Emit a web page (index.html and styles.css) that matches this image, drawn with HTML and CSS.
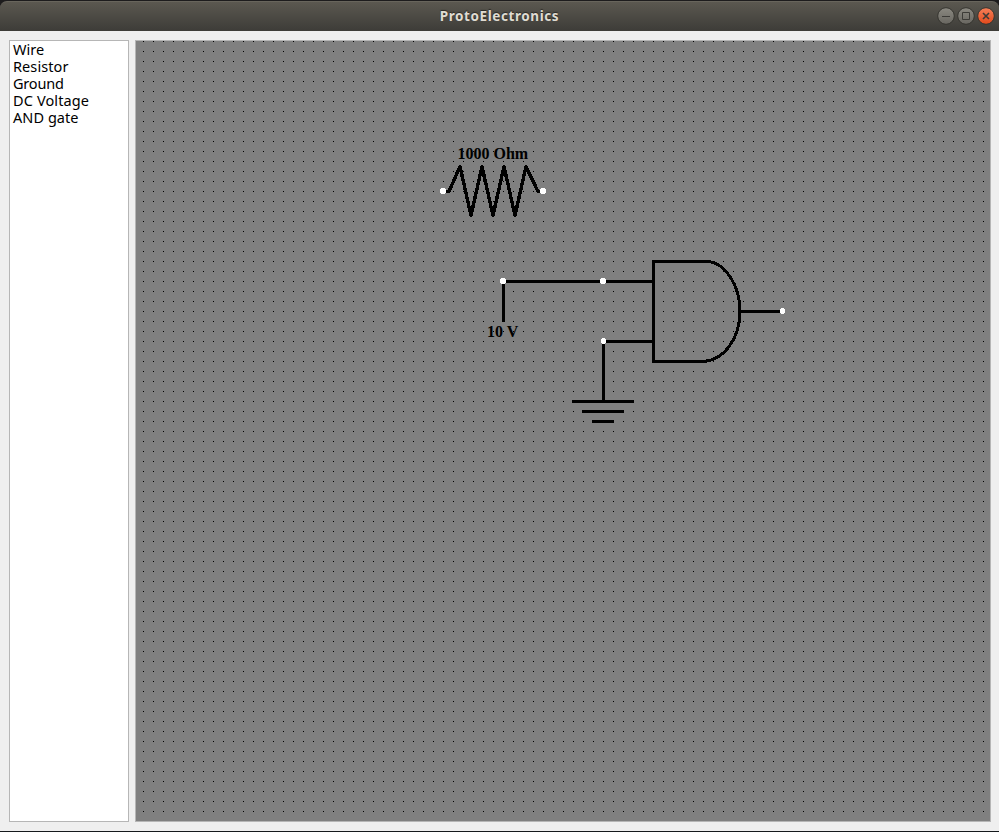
FILE: index.html
```html
<!DOCTYPE html>
<html lang="en">
<head>
<meta charset="utf-8">
<title>ProtoElectronics</title>
<link rel="stylesheet" href="styles.css">
</head>
<body>
<div class="window">
  <header class="titlebar">
    <h1 class="title">ProtoElectronics</h1>
    <div class="controls">
      <svg width="60" height="20" viewBox="0 0 60 20">
        <defs>
          <linearGradient id="grey" x1="0" y1="0" x2="0" y2="1"><stop offset="0" stop-color="#8b8981"/><stop offset="1" stop-color="#686660"/></linearGradient>
          <linearGradient id="orange" x1="0" y1="0" x2="0" y2="1"><stop offset="0" stop-color="#f58059"/><stop offset="1" stop-color="#e2491b"/></linearGradient>
        </defs>
        <g stroke="#35342f">
          <circle cx="10" cy="10" r="8.3" fill="url(#grey)"/>
          <circle cx="30" cy="10" r="8.3" fill="url(#grey)"/>
          <circle cx="50" cy="10" r="8.3" fill="url(#orange)"/>
        </g>
        <g fill="none" stroke="#3c3b37">
          <path d="M6 10.5h8"/>
          <path d="M26.5 6.5h7v7h-7z"/>
          <path d="M47 7l6 6M53 7l-6 6" stroke-width="1.6"/>
        </g>
      </svg>
    </div>
  </header>
  <main class="content">
    <ul class="parts">
      <li class="wire">Wire</li>
      <li class="resistor">Resistor</li>
      <li class="ground">Ground</li>
      <li class="voltage">DC Voltage</li>
      <li class="gate">AND gate</li>
    </ul>
    <section class="board">
      <svg class="circuit" width="854" height="780" viewBox="136 41 854 780">
        <defs>
          <pattern id="grid" x="143" y="41" width="10" height="10" patternUnits="userSpaceOnUse"><rect width="1" height="1" fill="#000"/></pattern>
        </defs>
        <rect x="136" y="41" width="854" height="780" fill="url(#grid)"/>
        <g class="lines">
          <path class="zigzag" d="M443 191.500H449L460 166.500L471 215.500L482 166.500L493 215.500L504 166.500L515 215.500L526 166.500L538 191.500H543"/>
          <path d="M503.500 321V281.500H653.500M603.500 401V341.500H653.500"/>
          <path d="M573.500 401.500H632.500M583.500 411.500H622.500M593.500 421.500H612.500"/>
          <path d="M703 261.500H653.500V361.500H701"/>
          <path d="M703 261.500H709C726 264 740 286 740 311.500C740 338 724 361.500 701 361.500"/>
          <path d="M740 311.500H782"/>
        </g>
        <g class="terminals">
          <path id="terminal" d="M441 188h4v1h1v4h-1v1h-4v-1h-1v-4h1z"/>
          <use href="#terminal" x="100"/>
          <use href="#terminal" x="60" y="90"/>
          <use href="#terminal" x="160" y="90"/>
          <path d="M602 338h3v1h1v4h-1v1h-3v-1h-1v-4h1z"/>
          <path d="M781 308h3v1h1v4h-1v1h-3v-1h-1v-4h1z"/>
        </g>
        <text class="label" x="457.500" y="159">1000 Ohm</text>
        <text class="label" x="487" y="337">10 V</text>
      </svg>
    </section>
  </main>
</div>
</body>
</html>
```
FILE: styles.css
```css
* { box-sizing: border-box; }
body { margin: 0; background: #1d1c1d; font-family: "Noto Sans", sans-serif; }
.window { width: 999px; height: 832px; padding-top: 1px; border-bottom: 1px solid #15191c; display: flex; flex-direction: column; }
.titlebar {
  height: 30px; padding-right: 3px;
  display: grid; grid-template-columns: 63px 1fr 60px; align-items: center;
  background: linear-gradient(#5b5850, #3d3c38);
  border-top: 1px solid #68655c;
  border-radius: 7px 7px 0 0;
}
.title {
  grid-column: 2; margin: 0; text-align: center; padding-bottom: 1px;
  font-size: 13.5px; line-height: 18px; font-weight: 700; color: #dfdbd2; letter-spacing: 0.58px;
  text-shadow: 0 -1px 1px #292824;
}
.controls { height: 20px; margin-top: -1px; }
.controls svg { display: block; }
.content { flex: 1; display: flex; gap: 6px; padding: 9px 8px 9px 9px; background: #efefef; }
.parts {
  width: 120px; margin: 0; padding: 0 3px; list-style: none;
  border: 1px solid #b6b6b6; background: #fff;
  font-size: 14.5px; line-height: 17px; color: #000; white-space: nowrap;
}
.resistor { letter-spacing: 0.08px; }
.ground { letter-spacing: -0.2px; }
.voltage { letter-spacing: 0.12px; }
.gate { letter-spacing: 0.06px; }
.board { flex: 1; border: 1px solid #b6b6b6; background: #808080; }
.circuit { display: block; shape-rendering: crispEdges; }
.lines { fill: none; stroke: #000; stroke-width: 3; stroke-linecap: round; stroke-linejoin: round; }
.zigzag { stroke-width: 3.4; }
.terminals { fill: #fff; }
.label { font: 700 16px "Liberation Serif", serif; fill: #000; }
```
